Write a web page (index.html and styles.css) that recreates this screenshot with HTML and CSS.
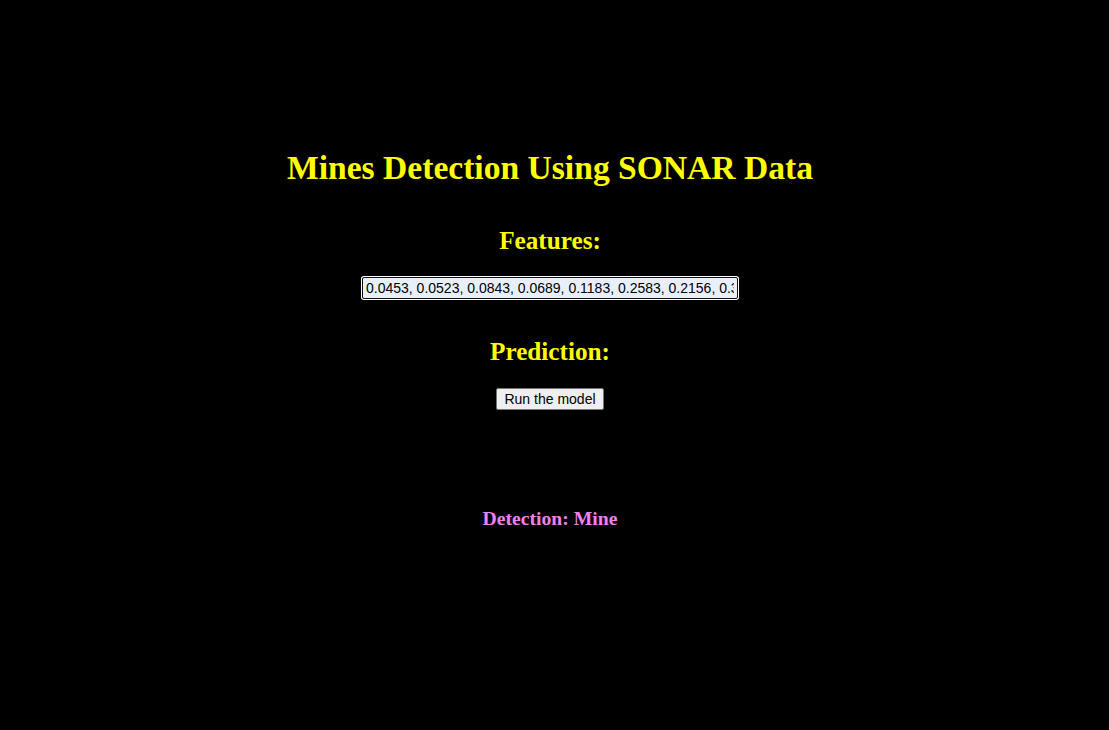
FILE: index.html
```html
<!DOCTYPE html>
<html>
<head>
<meta charset="utf-8">
<title>Mines Detection</title>
<link rel="stylesheet" href="styles.css">
</head>
<body>
<main class="page">
  <h1 class="title">Mines Detection Using SONAR Data</h1>
  <form class="form">
    <h2 class="label">Features:</h2>
    <input class="features" type="text" value="0.0453, 0.0523, 0.0843, 0.0689, 0.1183, 0.2583, 0.2156, 0.3481, 0.3337, 0.2872">
    <h2 class="label label-pred">Prediction:</h2>
    <button class="run" type="button">Run the model</button>
  </form>
  <h3 class="result">Detection: Mine</h3>
</main>
</body>
</html>
```
FILE: styles.css
```css
html, body {
  margin: 0;
  background: #000;
}
.page {
  padding: 149px 9px 0 0;
  text-align: center;
  font-family: "Liberation Serif", "Times New Roman", serif;
}
.title {
  margin: 0;
  color: #ffff00;
  font-size: 33.6px;
  line-height: 37px;
  font-weight: bold;
}
.form {
  display: flex;
  flex-direction: column;
  align-items: center;
}
.label {
  margin: 41px 0 0;
  color: #ffff00;
  font-size: 25.2px;
  line-height: 28px;
  font-weight: bold;
}
.label-pred {
  margin-top: 39px;
}
.features {
  margin-top: 22px;
  box-sizing: border-box;
  width: 376px;
  height: 22px;
  padding: 1px 3px;
  border: 1px solid #101010;
  border-radius: 2px;
  box-shadow: 0 0 0 1px #ffffff;
  background: #e8f0fe;
  color: #000;
  font-family: "Liberation Sans", Arial, sans-serif;
  font-size: 14px;
  outline: none;
}
.run {
  margin-top: 22px;
  box-sizing: border-box;
  height: 22px;
  padding: 1px 7px;
  border: 1px solid #767676;
  border-radius: 2px;
  background: #efefef;
  color: #000;
  font-family: "Liberation Sans", Arial, sans-serif;
  font-size: 14px;
}
.result {
  margin: 97px 0 0;
  color: #ee82ee;
  font-size: 19.66px;
  line-height: 22px;
  font-weight: bold;
}
```
